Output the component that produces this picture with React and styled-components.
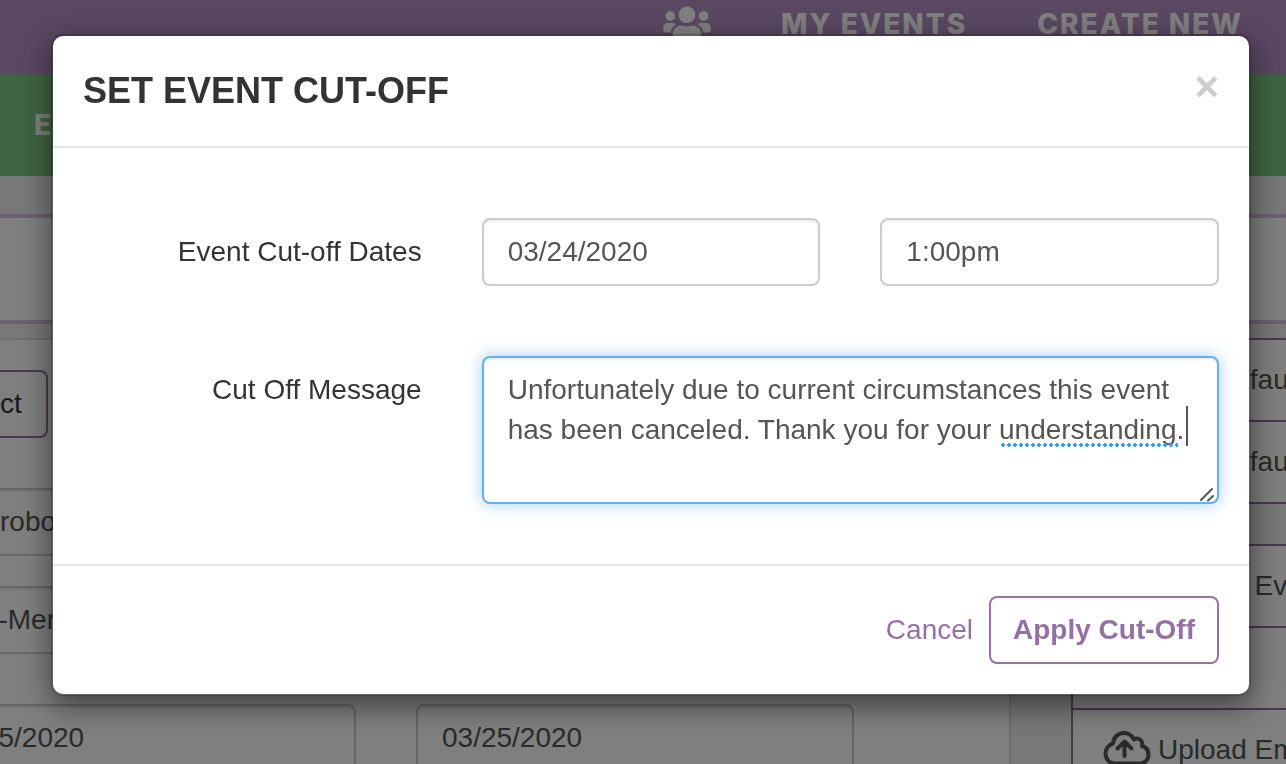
import React, { useState } from 'react'
import styled, { createGlobalStyle } from 'styled-components'
import { FaUsers } from 'react-icons/fa'


export default function App() {
    const [date, setDate] = useState('03/24/2020');
    const [time, setTime] = useState('1:00pm');
    const [message, setMessage] = useState(
        'Unfortunately due to current circumstances this event has been canceled. Thank you for your understanding.'
    );

  return (
    <>
    <GlobalStyle />
    <EventPage />
    <Overlay>
        <Modal role="dialog" aria-modal="true" aria-labelledby="cutoff-title">
            <ModalHeader>
                <ModalTitle id="cutoff-title">SET EVENT CUT-OFF</ModalTitle>
                <CloseButton type="button" aria-label="Close">×</CloseButton>
            </ModalHeader>
            <ModalBody>
                <Label htmlFor="cutoff-date">Event Cut-off Dates</Label>
                <Input id="cutoff-date" value={date} onChange={(e) => setDate(e.target.value)} />
                <Input aria-label="Event Cut-off Time" value={time} onChange={(e) => setTime(e.target.value)} />
                <Label htmlFor="cutoff-message">Cut Off Message</Label>
                <MessageBox>
                    <TextArea id="cutoff-message" rows={3} spellCheck={false} value={message} onChange={(e) => setMessage(e.target.value)} />
                    <SpellingMark />
                    <Caret />
                    <Grip viewBox="0 0 16 16" aria-hidden="true">
                        <path d="M2 14 L13 3 M9 14.500 L14 10" />
                    </Grip>
                </MessageBox>
            </ModalBody>
            <ModalFooter>
                <CancelLink href="#cancel">Cancel</CancelLink>
                <ApplyButton type="button">Apply Cut-Off</ApplyButton>
            </ModalFooter>
        </Modal>
    </Overlay>
    </>
  )
}

// the event editor that sits behind the dialog
function EventPage() {
  return (
    <Page>
        <TopNav>
            <UsersIcon />
            <NavLink href="#events">MY EVENTS</NavLink>
            <NavLink href="#new">CREATE NEW</NavLink>
        </TopNav>
        <GreenBar>
            <NavLink href="#event">EVENT</NavLink>
        </GreenBar>
        <Banner />
        <Columns>
            <Panel>
                <SelectButton type="button">Select</SelectButton>
                <Input aria-label="Event name" defaultValue="The robotics" />
                <Input aria-label="Ticket type" defaultValue="Kids-Members" />
                <DateRow>
                    <Input aria-label="Start date" defaultValue="03/25/2020" />
                    <Input aria-label="End date" defaultValue="03/25/2020" />
                </DateRow>
            </Panel>
            <Sidebar>
                <ActionList>
                    <Action><CloudUpload />Edit Default</Action>
                    <Action><CloudUpload />Edit Default</Action>
                </ActionList>
                <ActionList>
                    <Action><CloudUpload />Upload Event</Action>
                    <Action />
                    <Action><CloudUpload />Upload Emails</Action>
                </ActionList>
            </Sidebar>
        </Columns>
    </Page>
  )
}

function CloudUpload() {
  return (
    <CloudIcon viewBox="0 0 48 38" aria-hidden="true">
        <path d="M12 32.500 H37 C42 32.500 45.500 28.500 45.500 24 C45.500 19.500 43 16 39 15 C40.500 10 35.500 5.500 31 8.500 C29 4.500 25.500 2 21 2 C15 2 10.500 6.500 10 12.500 C5.500 14 2.500 18 2.500 22.500 C2.500 28 6.500 32.500 12 32.500 Z" />
        <path d="M21.500 25 V11.500 M14.500 17.500 L21.500 10.500 L28.500 17.500" />
    </CloudIcon>
  )
}


const GlobalStyle = createGlobalStyle`
    * {
        box-sizing: border-box;
    }
    body {
        margin: 0;
        overflow: hidden;
        background: #f0f0f0;
        color: #333;
        font-family: "Liberation Sans", Arial, sans-serif;
        font-size: 28px;
        line-height: 40px;
    }
    input, textarea, button {
        font: inherit;
    }
`

const Page = styled.div`
    height: 100vh;
    overflow: hidden;
`
const TopNav = styled.nav`
    display: flex;
    justify-content: flex-end;
    gap: 70px;
    height: 74px;
    padding: 4px 43px 0 0;
    background: #b58fc5;
    color: #fff;
`
const UsersIcon = styled(FaUsers)`
    width: 48px;
    height: 38px;
`
const NavLink = styled.a`
    font-family: Inter, sans-serif;
    font-weight: 800;
    letter-spacing: 2px;
    color: #fff;
    text-decoration: none;
`
const GreenBar = styled.div`
    display: flex;
    align-items: center;
    height: 102px;
    padding-left: 34px;
    background: #7ec982;
`
const Banner = styled.div`
    height: 110px;
    margin: 38px 0 14px;
    background: #fff;
    border-top: 4px solid #d6bfe0;
    border-bottom: 4px solid #d6bfe0;
`
/* the left column runs off the side of the window */
const Columns = styled.div`
    display: grid;
    grid-template-columns: 1fr 215px;
    gap: 60px;
    margin-left: -112px;
`
const Panel = styled.div`
    display: flex;
    flex-direction: column;
    align-items: flex-start;
    gap: 30px;
    padding: 30px;
    background: #fff;
    border: 2px solid #ddd;
    border-left: 0;
`
const DateRow = styled.div`
    display: grid;
    grid-template-columns: 438px 438px;
    gap: 60px;
    margin-top: 20px;
`
const Sidebar = styled.aside`
    display: flex;
    flex-direction: column;
    gap: 40px;
`
const ActionList = styled.ul`
    margin: 0;
    padding: 0;
    list-style: none;
    background: #fff;
    border: 2px solid #9570a5;
    border-right: 0;
`
const Action = styled.li`
    display: flex;
    align-items: center;
    gap: 7px;
    height: 80px;
    padding-left: 30px;
    overflow: hidden;
    white-space: nowrap;
    color: #555;
    & + & {
        height: 82px;
        border-top: 2px solid #9570a5;
    }
`
const CloudIcon = styled.svg`
    flex: none;
    width: 48px;
    height: 38px;
    fill: none;
    stroke: currentColor;
    stroke-width: 4;
    stroke-linecap: round;
    stroke-linejoin: round;
`

const Overlay = styled.div`
    position: fixed;
    inset: 0;
    padding: 34px 35px 0 51px;
    background: rgba(0, 0, 0, 0.5);
`
const Modal = styled.div`
    background: #fff;
    background-clip: padding-box;
    border: 2px solid rgba(0, 0, 0, 0.2);
    border-radius: 12px;
    box-shadow: 0 10px 30px rgba(0, 0, 0, 0.5);
`
const ModalHeader = styled.div`
    display: flex;
    justify-content: space-between;
    align-items: flex-start;
    padding: 30px;
    border-bottom: 2px solid #e5e5e5;
`
const ModalTitle = styled.h1`
    margin: 0;
    font-size: 36px;
    font-weight: 700;
    line-height: 50px;
`
const CloseButton = styled.button`
    padding: 0;
    border: 0;
    background: none;
    color: #ccc;
    font-size: 42px;
    font-weight: 700;
    line-height: 42px;
    cursor: pointer;
`
const ModalBody = styled.div`
    display: grid;
    grid-template-columns: repeat(3, 1fr);
    gap: 70px 60px;
    padding: 70px 30px 60px;
`
const Label = styled.label`
    padding-top: 14px;
    text-align: right;
`
const Input = styled.input`
    width: 100%;
    height: 68px;
    padding: 12px 24px;
    border: 2px solid #ccc;
    border-radius: 8px;
    background: #fff;
    box-shadow: inset 0 2px 2px rgba(0, 0, 0, 0.075);
    color: #555;
    outline: none;
`
const MessageBox = styled.div`
    position: relative;
    grid-column: span 2;
`
const TextArea = styled.textarea`
    display: block;
    width: 100%;
    height: 148px;
    padding: 12px 24px;
    border: 2px solid #66afe9;
    border-radius: 8px;
    background: #fff;
    box-shadow: inset 0 2px 2px rgba(0, 0, 0, 0.075), 0 0 16px rgba(102, 175, 233, 0.6);
    color: #555;
    outline: none;
    resize: none;
`
const SpellingMark = styled.span`
    position: absolute;
    top: 87px;
    left: 518px;
    width: 178px;
    height: 4px;
    background: radial-gradient(circle closest-side, #419bf9 80%, transparent) 0 0 / 6px 4px repeat-x;
    pointer-events: none;
`
const Caret = styled.span`
    position: absolute;
    top: 50px;
    left: 704px;
    width: 2px;
    height: 40px;
    background: #555;
    pointer-events: none;
`
const Grip = styled.svg`
    position: absolute;
    right: 4px;
    bottom: 2px;
    width: 16px;
    height: 16px;
    fill: none;
    stroke: #555;
    stroke-width: 2;
    stroke-linecap: round;
    pointer-events: none;
`
const ModalFooter = styled.div`
    display: flex;
    justify-content: flex-end;
    align-items: center;
    gap: 16px;
    padding: 30px;
    border-top: 2px solid #e5e5e5;
`
const CancelLink = styled.a`
    color: #9570a5;
    text-decoration: none;
`
const ApplyButton = styled.button`
    height: 68px;
    padding: 0 22px;
    border: 2px solid #9570a5;
    border-radius: 8px;
    background: #fff;
    color: #9570a5;
    font-weight: 700;
    white-space: nowrap;
    cursor: pointer;
`
const SelectButton = styled(ApplyButton)`
    margin-bottom: 20px;
    padding: 0 24px;
    color: #333;
    font-weight: 400;
`
